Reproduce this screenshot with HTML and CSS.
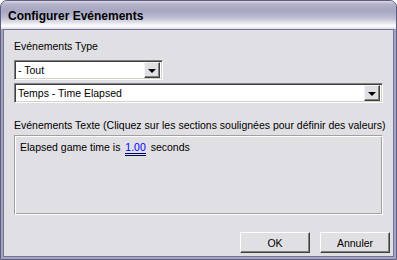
FILE: index.html
```html
<!DOCTYPE html>
<html lang="fr">
<head>
  <meta charset="UTF-8" />
  <title>Configurer Evénements</title>
  <link rel="stylesheet" href="styles.css">
</head>
<body>
  <div class="window">
    <div class="titlebar">Configurer Evénements</div>
    <div class="client">
      <div class="label">Evénements Type</div>
      <div class="combo combo-small">
        <span class="combo-text">- Tout</span>
        <span class="combo-btn"><span class="arrow"></span></span>
      </div>
      <div class="combo combo-wide">
        <span class="combo-text">Temps - Time Elapsed</span>
        <span class="combo-btn"><span class="arrow"></span></span>
      </div>
      <div class="label label-text">Evénements Texte (Cliquez sur les sections soulignées pour définir des valeurs)</div>
      <div class="textbox">
        Elapsed game time is <a class="param">1.00</a> seconds
      </div>
      <div class="buttons">
        <button class="btn">OK</button>
        <button class="btn">Annuler</button>
      </div>
    </div>
  </div>
</body>
</html>
```

FILE: styles.css
```css
body {
  margin: 0;
  background: #ffffff;
  font-family: 'Liberation Sans', Arial, sans-serif;
  font-size: 10.5px;
  color: #000;
}
.window {
  width: 397px;
  height: 260px;
  box-sizing: border-box;
  border: 1px solid #5e5e82;
  border-radius: 7px 7px 0 0;
  background: #a4a4bf;
  display: flex;
  flex-direction: column;
  overflow: hidden;
}
.titlebar {
  height: 28px;
  flex: none;
  padding-left: 7px;
  line-height: 30px;
  font-size: 12px;
  font-weight: bold;
  color: #000;
  background: linear-gradient(to bottom, #dcdce8 0px, #b3b2ca 3px, #a7a6c2 10px, #bebdd3 17px, #eeeef4 23px, #ffffff 25px, #d8d8e2 28px);
}
.client {
  flex: 1;
  margin: 0 2px 2px;
  border: 1px solid #73739a;
  background: #e0dfe3;
  padding: 10px 3px 0 10px;
  display: flex;
  flex-direction: column;
  align-items: flex-start;
}
.label {
  height: 13px;
  line-height: 13px;
  white-space: nowrap;
}
.combo {
  box-sizing: border-box;
  height: 20px;
  background: #fff;
  border: 1px solid;
  border-color: #808080 #ffffff #ffffff #808080;
  box-shadow: inset 1px 1px #404040, inset -1px -1px #d4d0c8;
  display: flex;
  align-items: center;
  padding: 2px;
}
.combo-small {
  width: 149px;
  margin-top: 7px;
}
.combo-wide {
  width: 369px;
  margin-top: 3px;
}
.combo-text {
  flex: 1;
  padding-left: 1px;
  line-height: 14px;
}
.combo-btn {
  box-sizing: border-box;
  width: 16px;
  height: 16px;
  background: #e0dfe3;
  border: 1px solid;
  border-color: #f4f4f4 #404040 #404040 #f4f4f4;
  box-shadow: inset -1px -1px #808080;
  display: flex;
  align-items: center;
  justify-content: center;
}
.arrow {
  width: 0;
  height: 0;
  border-left: 4px solid transparent;
  border-right: 4px solid transparent;
  border-top: 4px solid #000;
  margin-top: 1px;
}
.label-text {
  margin-top: 16px;
}
.textbox {
  box-sizing: border-box;
  width: 369px;
  height: 80px;
  margin-top: 3px;
  padding: 5px 5px;
  border: 1px solid;
  border-color: #a0a0a0 #ffffff #ffffff #a0a0a0;
  box-shadow: inset 1px 1px #ffffff, inset -1px -1px #a0a0a0;
  line-height: 13px;
}
.param {
  color: #0000ff;
  margin: 0 2px;
  border-bottom: 3px double #000060;
  cursor: pointer;
}
.buttons {
  align-self: flex-end;
  display: flex;
  gap: 10px;
  margin-top: 17px;
}
.btn {
  box-sizing: border-box;
  width: 70px;
  height: 21px;
  font-family: 'Liberation Sans', Arial, sans-serif;
  font-size: 10.5px;
  color: #000;
  background: #e0dfe3;
  border: 1px solid;
  border-color: #ffffff #404040 #404040 #ffffff;
  box-shadow: inset -1px -1px #808080;
  padding: 0;
}
```
